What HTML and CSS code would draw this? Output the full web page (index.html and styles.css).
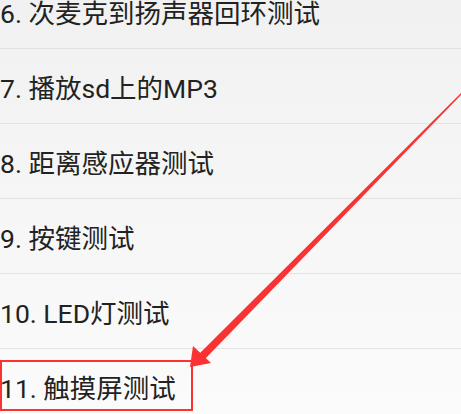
FILE: index.html
```html
<!DOCTYPE html>
<html>
<head>
<meta charset="utf-8">
<link rel="stylesheet" href="styles.css">
</head>
<body>
<div class="screen">
  <ul class="list">
    <li class="row">6. 次麦克到扬声器回环测试</li>
    <li class="row">7. 播放sd上的MP3</li>
    <li class="row">8. 距离感应器测试</li>
    <li class="row">9. 按键测试</li>
    <li class="row">10. LED灯测试</li>
    <li class="row">11. 触摸屏测试</li>
  </ul>
  <div class="highlight"></div>
  <svg class="arrow" width="461" height="414" viewBox="0 0 461 414">
    <polygon points="462,92 462.6,93.4 203,361 197.5,355.5" fill="#fa3232"/>
    <polygon points="190,367 193,346 211,363" fill="#fa3232"/>
  </svg>
</div>
</body>
</html>
```
FILE: styles.css
```css
html, body {
  margin: 0;
  padding: 0;
}
body {
  width: 461px;
  height: 414px;
  overflow: hidden;
  background: linear-gradient(#f1f1f1, #fbfbfb);
}
.screen {
  position: relative;
  width: 461px;
  height: 414px;
  overflow: hidden;
}
.list {
  list-style: none;
  margin: -26px 0 0 0;
  padding: 0;
}
.row {
  height: 74px;
  border-bottom: 1px solid #e3e3e3;
  display: flex;
  align-items: center;
  padding-left: 0;
  font-family: Roboto, "Noto Sans CJK SC", sans-serif;
  font-size: 26.5px;
  color: #222222;
  white-space: nowrap;
}
.highlight {
  position: absolute;
  left: 0;
  top: 360px;
  width: 189px;
  height: 47px;
  border: 2.5px solid #fa3232;
}
.arrow {
  position: absolute;
  left: 0;
  top: 0;
}
```
